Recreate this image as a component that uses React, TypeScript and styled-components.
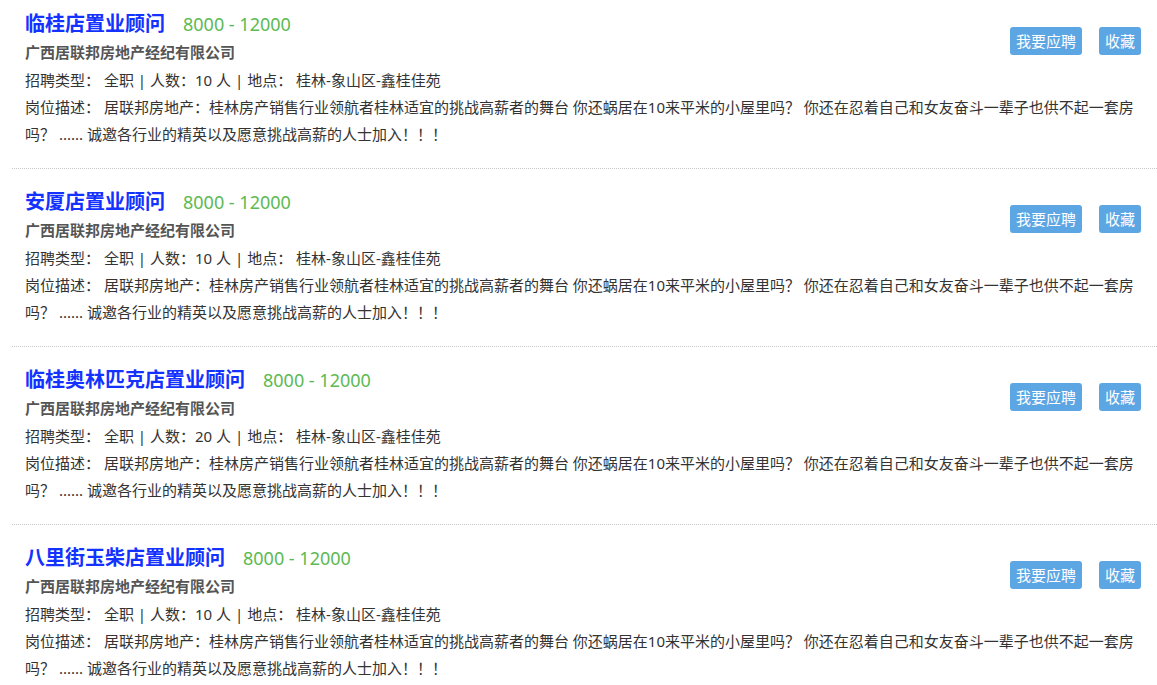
import React from 'react';
import styled, { createGlobalStyle } from 'styled-components';

const GlobalStyle = createGlobalStyle`
  html, body {
    margin: 0;
    padding: 0;
    background: #fff;
  }
  body {
    font-family: "Microsoft YaHei", "Noto Sans", "Noto Sans CJK SC", sans-serif;
    color: #333;
  }
`;

interface Job {
  id: number;
  title: string;
  salary: string;
  company: string;
  type: string;
  count: number;
  location: string;
  description: string;
}

const DESC =
  '居联邦房地产：桂林房产销售行业领航者桂林适宜的挑战高薪者的舞台 你还蜗居在10来平米的小屋里吗？ 你还在忍着自己和女友奋斗一辈子也供不起一套房吗？ ...... 诚邀各行业的精英以及愿意挑战高薪的人士加入！！！';

const jobs: Job[] = [
  { id: 1, title: '临桂店置业顾问', salary: '8000 - 12000', company: '广西居联邦房地产经纪有限公司', type: '全职', count: 10, location: '桂林-象山区-鑫桂佳苑', description: DESC },
  { id: 2, title: '安厦店置业顾问', salary: '8000 - 12000', company: '广西居联邦房地产经纪有限公司', type: '全职', count: 10, location: '桂林-象山区-鑫桂佳苑', description: DESC },
  { id: 3, title: '临桂奥林匹克店置业顾问', salary: '8000 - 12000', company: '广西居联邦房地产经纪有限公司', type: '全职', count: 20, location: '桂林-象山区-鑫桂佳苑', description: DESC },
  { id: 4, title: '八里街玉柴店置业顾问', salary: '8000 - 12000', company: '广西居联邦房地产经纪有限公司', type: '全职', count: 10, location: '桂林-象山区-鑫桂佳苑', description: DESC },
];

const List = styled.div`
  display: flex;
  flex-direction: column;
`;

const Item = styled.div`
  margin-left: 12px;
  padding: 19px 16px 20px 13px;
  border-bottom: 1px dotted #c8c8c8;

  &:first-child {
    padding-top: 10px;
  }
`;

const Top = styled.div`
  display: flex;
  align-items: flex-start;
`;

const Info = styled.div`
  flex: 1;
  min-width: 0;
`;

const TitleRow = styled.div`
  display: flex;
  align-items: baseline;
  height: 28px;
  line-height: 28px;
`;

const Title = styled.a`
  font-size: 20px;
  font-weight: bold;
  color: #1432ff;
  text-decoration: none;
  cursor: pointer;
`;

const Salary = styled.span`
  margin-left: 18px;
  font-size: 18px;
  color: #5cba52;
`;

const Company = styled.div`
  font-size: 15px;
  font-weight: bold;
  color: #555;
  line-height: 28px;
`;

const Meta = styled.div`
  font-size: 15px;
  line-height: 28px;
  color: #333;
`;

const Actions = styled.div`
  display: flex;
  gap: 17px;
  margin-top: 17px;
`;

const Button = styled.button`
  height: 28px;
  padding: 0 6px;
  border: none;
  border-radius: 3px;
  background: #5da6e4;
  color: #fff;
  font-family: inherit;
  font-size: 15px;
  line-height: 28px;
  cursor: pointer;
`;

const Desc = styled.div`
  font-size: 15px;
  line-height: 27px;
  color: #333;
`;

const JobItem: React.FC<{ job: Job }> = ({ job }) => (
  <Item>
    <Top>
      <Info>
        <TitleRow>
          <Title>{job.title}</Title>
          <Salary>{job.salary}</Salary>
        </TitleRow>
        <Company>{job.company}</Company>
        <Meta>
          招聘类型： {job.type} | 人数：{job.count} 人 | 地点： {job.location}
        </Meta>
      </Info>
      <Actions>
        <Button>我要应聘</Button>
        <Button>收藏</Button>
      </Actions>
    </Top>
    <Desc>岗位描述： {job.description}</Desc>
  </Item>
);

const App: React.FC = () => (
  <>
    <GlobalStyle />
    <List>
      {jobs.map(job => (
        <JobItem key={job.id} job={job} />
      ))}
    </List>
  </>
);

export default App;
